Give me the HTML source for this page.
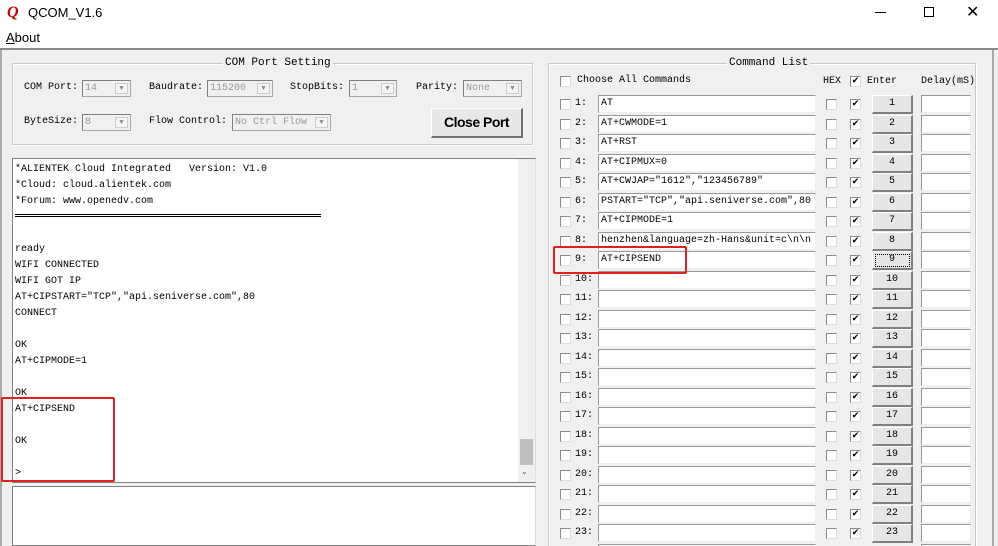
<!DOCTYPE html>
<html><head><meta charset="utf-8"><style>
*{margin:0;padding:0;box-sizing:border-box}
html,body{width:998px;height:546px;overflow:hidden}
body{background:#f0f0f0;position:relative;font-family:"Liberation Mono",monospace;font-size:10px;color:#000}
.a{position:absolute}
.title{left:0;top:0;width:998px;height:26px;background:#fff}
.menu{left:0;top:26px;width:998px;height:22px;background:#fff}
.gb{position:absolute;border:1px solid #c8c8c8;box-shadow:inset 1px 1px 0 #fff,1px 1px 0 #fff}
.gt{position:absolute;background:#f0f0f0;padding:0 2px;font-size:11px;top:-7px;line-height:12px}
.combo{position:absolute;height:17px;border:1px solid #a8a8a8;border-top-color:#808080;border-left-color:#808080;background:#f0f0f0;color:#999;font-size:10px;line-height:15px;padding-left:2px}
.combo i{position:absolute;right:2px;top:2px;width:13px;height:11px;border:1px solid #ccc;background:#f4f4f4;font-style:normal;font-size:7px;text-align:center;line-height:10px;color:#888}
.lbl{position:absolute;font-size:10px}
.cb{position:absolute;width:11px;height:11px;border:1px solid #8a8a8a;border-right-color:#ddd;border-bottom-color:#ddd;background:#fff}
.ck{position:absolute;width:11px;height:11px;border:1px solid #8a8a8a;border-right-color:#ddd;border-bottom-color:#ddd;background:#fff;font-size:9px;line-height:9px;text-align:center;font-family:"DejaVu Sans",sans-serif}
.row{position:absolute;left:0;width:440px;height:19px}
.row .n{position:absolute;left:27px;top:3px;font-size:10px;width:22px}
.row .in{position:absolute;left:50px;top:0;width:218px;height:18px;background:#fff;border:1px solid #999;border-right-color:#eee;border-bottom-color:#eee;font-size:10px;line-height:16px;padding-left:2px;white-space:nowrap;overflow:hidden}
.row .b{position:absolute;left:324px;top:0;width:41px;height:19px;background:#e6e6e6;border:1px solid #fff;border-right:2px solid #808080;border-bottom:2px solid #808080;text-align:center;font-size:10px;line-height:16px}
.row .d{position:absolute;left:373px;top:0;width:50px;height:18px;background:#fff;border:1px solid #999;border-right-color:#eee;border-bottom-color:#eee}
.log{left:12px;top:158px;width:524px;height:325px;background:#fff;border:1px solid #808080;border-right-color:#ddd}
.log pre{font-family:"Liberation Mono",monospace;font-size:10px;line-height:16px;position:absolute;left:2px;top:3px}
</style></head><body>
<div class="a title"></div>
<div class="a" style="left:7px;top:4px;font:bold italic 16px 'Liberation Serif',serif;color:#c00">Q</div>
<div class="a" style="left:28px;top:5px;font:13px 'Liberation Sans',sans-serif">QCOM_V1.6</div>
<div class="a" style="left:875px;top:12px;width:11px;height:1px;background:#000"></div>
<div class="a" style="left:924px;top:7px;width:10px;height:10px;border:1px solid #000"></div>
<div class="a" style="left:966px;top:2px;font:16px 'DejaVu Sans',sans-serif">✕</div>
<div class="a menu"></div>
<div class="a" style="left:6px;top:30px;font:13px 'Liberation Sans',sans-serif"><u>A</u>bout</div>
<div class="a" style="left:0;top:48px;width:998px;height:2px;background:#888"></div>
<div class="a" style="left:0;top:50px;width:2px;height:496px;background:#aaa"></div>
<div class="a" style="left:992px;top:50px;width:2px;height:496px;background:#aaa"></div>

<div class="gb" style="left:12px;top:63px;width:521px;height:82px"><div class="gt" style="left:210px">COM Port Setting</div></div>
<div class="lbl" style="left:24px;top:82px">COM Port:</div>
<div class="combo" style="left:82px;top:80px;width:49px">14<i>▼</i></div>
<div class="lbl" style="left:149px;top:82px">Baudrate:</div>
<div class="combo" style="left:207px;top:80px;width:66px">115200<i>▼</i></div>
<div class="lbl" style="left:290px;top:82px">StopBits:</div>
<div class="combo" style="left:349px;top:80px;width:48px">1<i>▼</i></div>
<div class="lbl" style="left:416px;top:82px">Parity:</div>
<div class="combo" style="left:463px;top:80px;width:59px">None<i>▼</i></div>
<div class="lbl" style="left:24px;top:116px">ByteSize:</div>
<div class="combo" style="left:82px;top:114px;width:49px">8<i>▼</i></div>
<div class="lbl" style="left:149px;top:116px">Flow Control:</div>
<div class="combo" style="left:232px;top:114px;width:99px">No Ctrl Flow<i>▼</i></div>
<div class="a" style="left:431px;top:108px;width:92px;height:30px;background:#e8e8e8;border:1px solid #fff;border-right:2px solid #707070;border-bottom:2px solid #707070;font:bold 14px 'Liberation Sans',sans-serif;letter-spacing:-0.5px;text-align:center;line-height:27px">Close Port</div>

<div class="a log"><pre>*ALIENTEK Cloud Integrated   Version: V1.0
*Cloud: cloud.alientek.com
*Forum: www.openedv.com


ready
WIFI CONNECTED
WIFI GOT IP
AT+CIPSTART="TCP","api.seniverse.com",80
CONNECT

OK
AT+CIPMODE=1

OK
AT+CIPSEND

OK

&gt;</pre>
<div class="a" style="left:2px;top:55px;width:306px;height:3px;border-top:1px solid #000;border-bottom:1px solid #000"></div>
<div class="a" style="left:505px;top:0;width:17px;height:323px;background:#f0f0f0"></div>
<div class="a" style="left:507px;top:280px;width:13px;height:26px;background:#c0c0c0"></div>
<div class="a" style="left:508px;top:308px;font-size:8px;color:#555">⌄</div>
</div>
<div class="a" style="left:12px;top:486px;width:524px;height:60px;background:#fff;border:1px solid #808080;border-right-color:#ddd"></div>
<div class="a" style="left:1px;top:397px;width:114px;height:85px;border:2px solid #e02020;border-radius:2px"></div>

<div class="gb" style="left:548px;top:63px;width:428px;height:490px"><div class="gt" style="left:178px">Command List</div></div>
<div class="cb" style="left:560px;top:76px"></div>
<div class="lbl" style="left:577px;top:75px">Choose All Commands</div>
<div class="lbl" style="left:823px;top:76px">HEX</div>
<div class="ck" style="left:850px;top:76px">✔</div>
<div class="lbl" style="left:867px;top:76px">Enter</div>
<div class="lbl" style="left:921px;top:76px">Delay(mS)</div>

<div class="a" style="left:548px;top:95px;width:440px;height:451px;overflow:hidden">
<div class="row" style="top:0"><div class="cb" style="left:12px;top:4px"></div><div class="n">1:</div><div class="in">AT</div><div class="cb" style="left:278px;top:4px"></div><div class="ck" style="left:302px;top:4px">✔</div><div class="b">1</div><div class="d"></div></div>
<div class="row" style="top:19.5px"><div class="cb" style="left:12px;top:4px"></div><div class="n">2:</div><div class="in">AT+CWMODE=1</div><div class="cb" style="left:278px;top:4px"></div><div class="ck" style="left:302px;top:4px">✔</div><div class="b">2</div><div class="d"></div></div>
<div class="row" style="top:39px"><div class="cb" style="left:12px;top:4px"></div><div class="n">3:</div><div class="in">AT+RST</div><div class="cb" style="left:278px;top:4px"></div><div class="ck" style="left:302px;top:4px">✔</div><div class="b">3</div><div class="d"></div></div>
<div class="row" style="top:58.5px"><div class="cb" style="left:12px;top:4px"></div><div class="n">4:</div><div class="in">AT+CIPMUX=0</div><div class="cb" style="left:278px;top:4px"></div><div class="ck" style="left:302px;top:4px">✔</div><div class="b">4</div><div class="d"></div></div>
<div class="row" style="top:78px"><div class="cb" style="left:12px;top:4px"></div><div class="n">5:</div><div class="in">AT+CWJAP="1612","123456789"</div><div class="cb" style="left:278px;top:4px"></div><div class="ck" style="left:302px;top:4px">✔</div><div class="b">5</div><div class="d"></div></div>
<div class="row" style="top:97.5px"><div class="cb" style="left:12px;top:4px"></div><div class="n">6:</div><div class="in">PSTART="TCP","api.seniverse.com",80</div><div class="cb" style="left:278px;top:4px"></div><div class="ck" style="left:302px;top:4px">✔</div><div class="b">6</div><div class="d"></div></div>
<div class="row" style="top:117px"><div class="cb" style="left:12px;top:4px"></div><div class="n">7:</div><div class="in">AT+CIPMODE=1</div><div class="cb" style="left:278px;top:4px"></div><div class="ck" style="left:302px;top:4px">✔</div><div class="b">7</div><div class="d"></div></div>
<div class="row" style="top:136.5px"><div class="cb" style="left:12px;top:4px"></div><div class="n">8:</div><div class="in">henzhen&amp;language=zh-Hans&amp;unit=c\n\n</div><div class="cb" style="left:278px;top:4px"></div><div class="ck" style="left:302px;top:4px">✔</div><div class="b">8</div><div class="d"></div></div>
<div class="row" style="top:156px"><div class="cb" style="left:12px;top:4px"></div><div class="n">9:</div><div class="in">AT+CIPSEND</div><div class="cb" style="left:278px;top:4px"></div><div class="ck" style="left:302px;top:4px">✔</div><div class="b" style="outline:1px dotted #000;outline-offset:-4px">9</div><div class="d"></div></div>
<div class="row" style="top:175.5px"><div class="cb" style="left:12px;top:4px"></div><div class="n">10:</div><div class="in"></div><div class="cb" style="left:278px;top:4px"></div><div class="ck" style="left:302px;top:4px">✔</div><div class="b">10</div><div class="d"></div></div>
<div class="row" style="top:195px"><div class="cb" style="left:12px;top:4px"></div><div class="n">11:</div><div class="in"></div><div class="cb" style="left:278px;top:4px"></div><div class="ck" style="left:302px;top:4px">✔</div><div class="b">11</div><div class="d"></div></div>
<div class="row" style="top:214.5px"><div class="cb" style="left:12px;top:4px"></div><div class="n">12:</div><div class="in"></div><div class="cb" style="left:278px;top:4px"></div><div class="ck" style="left:302px;top:4px">✔</div><div class="b">12</div><div class="d"></div></div>
<div class="row" style="top:234px"><div class="cb" style="left:12px;top:4px"></div><div class="n">13:</div><div class="in"></div><div class="cb" style="left:278px;top:4px"></div><div class="ck" style="left:302px;top:4px">✔</div><div class="b">13</div><div class="d"></div></div>
<div class="row" style="top:253.5px"><div class="cb" style="left:12px;top:4px"></div><div class="n">14:</div><div class="in"></div><div class="cb" style="left:278px;top:4px"></div><div class="ck" style="left:302px;top:4px">✔</div><div class="b">14</div><div class="d"></div></div>
<div class="row" style="top:273px"><div class="cb" style="left:12px;top:4px"></div><div class="n">15:</div><div class="in"></div><div class="cb" style="left:278px;top:4px"></div><div class="ck" style="left:302px;top:4px">✔</div><div class="b">15</div><div class="d"></div></div>
<div class="row" style="top:292.5px"><div class="cb" style="left:12px;top:4px"></div><div class="n">16:</div><div class="in"></div><div class="cb" style="left:278px;top:4px"></div><div class="ck" style="left:302px;top:4px">✔</div><div class="b">16</div><div class="d"></div></div>
<div class="row" style="top:312px"><div class="cb" style="left:12px;top:4px"></div><div class="n">17:</div><div class="in"></div><div class="cb" style="left:278px;top:4px"></div><div class="ck" style="left:302px;top:4px">✔</div><div class="b">17</div><div class="d"></div></div>
<div class="row" style="top:331.5px"><div class="cb" style="left:12px;top:4px"></div><div class="n">18:</div><div class="in"></div><div class="cb" style="left:278px;top:4px"></div><div class="ck" style="left:302px;top:4px">✔</div><div class="b">18</div><div class="d"></div></div>
<div class="row" style="top:351px"><div class="cb" style="left:12px;top:4px"></div><div class="n">19:</div><div class="in"></div><div class="cb" style="left:278px;top:4px"></div><div class="ck" style="left:302px;top:4px">✔</div><div class="b">19</div><div class="d"></div></div>
<div class="row" style="top:370.5px"><div class="cb" style="left:12px;top:4px"></div><div class="n">20:</div><div class="in"></div><div class="cb" style="left:278px;top:4px"></div><div class="ck" style="left:302px;top:4px">✔</div><div class="b">20</div><div class="d"></div></div>
<div class="row" style="top:390px"><div class="cb" style="left:12px;top:4px"></div><div class="n">21:</div><div class="in"></div><div class="cb" style="left:278px;top:4px"></div><div class="ck" style="left:302px;top:4px">✔</div><div class="b">21</div><div class="d"></div></div>
<div class="row" style="top:409.5px"><div class="cb" style="left:12px;top:4px"></div><div class="n">22:</div><div class="in"></div><div class="cb" style="left:278px;top:4px"></div><div class="ck" style="left:302px;top:4px">✔</div><div class="b">22</div><div class="d"></div></div>
<div class="row" style="top:429px"><div class="cb" style="left:12px;top:4px"></div><div class="n">23:</div><div class="in"></div><div class="cb" style="left:278px;top:4px"></div><div class="ck" style="left:302px;top:4px">✔</div><div class="b">23</div><div class="d"></div></div>
<div class="row" style="top:448.5px"><div class="in"></div><div class="d"></div></div>
</div>
<div class="a" style="left:553px;top:246px;width:134px;height:28px;border:2px solid #e02020;border-radius:2px"></div>
</body></html>
